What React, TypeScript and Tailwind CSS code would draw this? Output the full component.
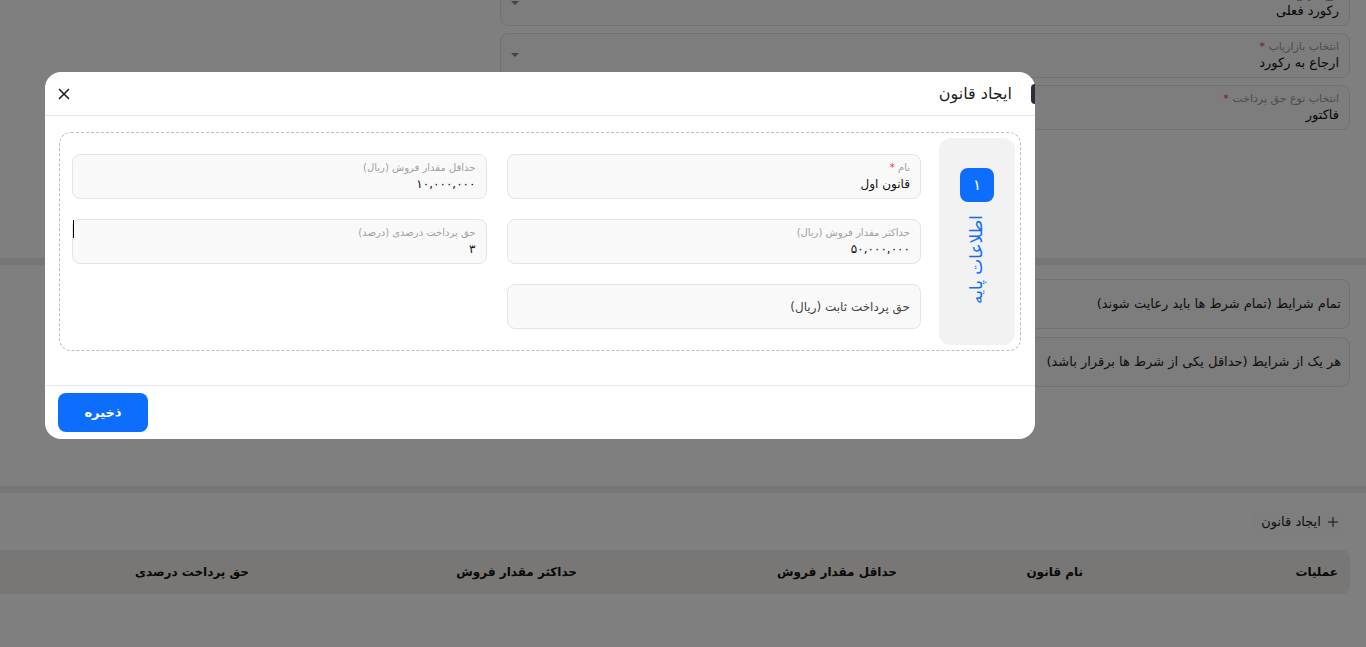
import { X, Plus } from 'lucide-react'

const FONT = { fontFamily: '"DejaVu Sans", "Noto Sans", sans-serif' }

function BgSelect({ label, value, required }: { label: string; value: string; required?: boolean }) {
  return (
    <div className="relative h-[45px] rounded-lg border border-[#e2e2e2] bg-[#fafafa] pr-[10px] pt-[6px]">
      <div className="text-[11px] leading-[14px] text-[#9a9a9a]">
        {label}
        {required && <span className="text-red-500"> *</span>}
      </div>
      <div className="text-[13px] leading-[18px] text-[#111]">{value}</div>
      <span className="absolute left-[10px] top-[19px] h-0 w-0 border-x-[4px] border-t-[4px] border-x-transparent border-t-[#888]" />
    </div>
  )
}

function Field({ label, value, required, caret }: { label: string; value: string; required?: boolean; caret?: boolean }) {
  return (
    <div className="relative h-[45px] rounded-lg border border-[#e4e4e7] bg-[#f9f9f9] pr-[10px] pt-[6px]">
      {caret && <span className="absolute left-0 top-0 h-[18px] w-px bg-black" />}
      <div className="text-[10px] leading-[14px] text-[#a0a0a0]">
        {label}
        {required && <span className="text-red-500"> *</span>}
      </div>
      <div className="text-[12px] leading-[18px] text-[#111]">{value}</div>
    </div>
  )
}

const COLUMNS = [
  { title: 'عملیات', w: 'w-[255px]' },
  { title: 'نام قانون', w: 'w-[186px]' },
  { title: 'حداقل مقدار فروش', w: 'w-[320px]' },
  { title: 'حداکثر مقدار فروش', w: 'w-[328px]' },
  { title: 'حق پرداخت درصدی', w: 'w-[200px]' },
]

export default function App() {
  return (
    <div dir="rtl" style={FONT} className="relative h-[647px] w-full overflow-hidden bg-[#ececec]">
      {/* page behind the dialog */}
      <div className="flex h-full flex-col gap-[7px]">
        <div className="h-[258px] bg-white pr-4">
          <div className="-mt-[19px] flex w-[850px] flex-col gap-[7px]">
            <BgSelect label="نوع مرجع" value="رکورد فعلی" />
            <BgSelect label="انتخاب بازاریاب" value="ارجاع به رکورد" required />
            <BgSelect label="انتخاب نوع حق پرداخت" value="فاکتور" required />
          </div>
        </div>
        <div className="flex h-[221px] flex-col gap-[8px] bg-white pr-4 pt-[14px]">
          <div className="flex h-[50px] w-[850px] items-center rounded-lg border border-[#e2e2e2] bg-[#fafafa] pr-[8px] text-[13px] text-[#222]">
            تمام شرایط (تمام شرط ها باید رعایت شوند)
          </div>
          <div className="flex h-[50px] w-[850px] items-center rounded-lg border border-[#e2e2e2] bg-[#fafafa] pr-[8px] text-[13px] text-[#222]">
            هر یک از شرایط (حداقل یکی از شرط ها برقرار باشد)
          </div>
        </div>
        <div className="flex flex-1 flex-col bg-white pr-4 pt-[13px]">
          <button className="flex h-[32px] w-[98px] items-center justify-center gap-1 rounded-lg bg-[#fdfdfd] text-[13px] text-[#222]">
            <Plus className="h-4 w-4" strokeWidth={1.5} />
            ایجاد قانون
          </button>
          <div className="mt-[12px] flex h-[44px] items-center rounded-r-lg bg-[#f0efea] pr-[12px] text-[12px] font-bold text-[#111]">
            {COLUMNS.map((c) => (
              <div key={c.title} className={c.w}>
                {c.title}
              </div>
            ))}
          </div>
        </div>
      </div>

      {/* overlay */}
      <div className="absolute inset-0 bg-black/50" />

      {/* dialog */}
      <div className="absolute left-[45px] top-[72px] w-[990px] rounded-2xl bg-white">
        <span className="absolute right-0 top-[12px] h-[20px] w-[4px] rounded-l bg-[#2b2f3b]" />
        <div className="flex h-[44px] items-center justify-between border-b border-[#e5e7eb] pl-[10px] pr-[23px]">
          <h2 className="text-[16px] text-[#222]">ایجاد قانون</h2>
          <button className="text-[#222]">
            <X className="h-[18px] w-[18px]" strokeWidth={2.2} />
          </button>
        </div>

        <div className="px-[14px] pb-[34px] pt-4">
          <div className="flex rounded-xl border border-dashed border-[#bdbdbd] p-[5px]">
            {/* step rail */}
            <div className="flex w-[76px] flex-col items-center rounded-xl bg-[#f2f2f2] pt-[30px]">
              <div className="flex h-[34px] w-[34px] items-center justify-center rounded-lg bg-[#0d6efd] text-[15px] text-white">
                ۱
              </div>
              <div className="mt-[13px] rotate-180 text-[17px] text-[#0d6efd] [writing-mode:vertical-rl]">اطلاعات پایه</div>
            </div>

            {/* fields */}
            <div className="grid flex-1 grid-cols-2 gap-5 py-[16px] pl-[7px] pr-[18px]">
              <Field label="نام" value="قانون اول" required />
              <Field label="حداقل مقدار فروش (ریال)" value="۱۰,۰۰۰,۰۰۰" />
              <Field label="حداکثر مقدار فروش (ریال)" value="۵۰,۰۰۰,۰۰۰" />
              <Field label="حق پرداخت درصدی (درصد)" value="۳" caret />
              <div className="flex h-[45px] items-center rounded-lg border border-[#e4e4e7] bg-[#f9f9f9] pr-[10px] text-[12px] text-[#444]">
                حق پرداخت ثابت (ریال)
              </div>
            </div>
          </div>
        </div>

        <div className="flex h-[54px] items-start border-t border-[#e5e7eb] pl-[13px] pt-[7px]" dir="ltr">
          <button className="h-[39px] w-[90px] rounded-lg bg-[#0d6efd] text-[13px] font-bold text-white">ذخیره</button>
        </div>
      </div>
    </div>
  )
}
